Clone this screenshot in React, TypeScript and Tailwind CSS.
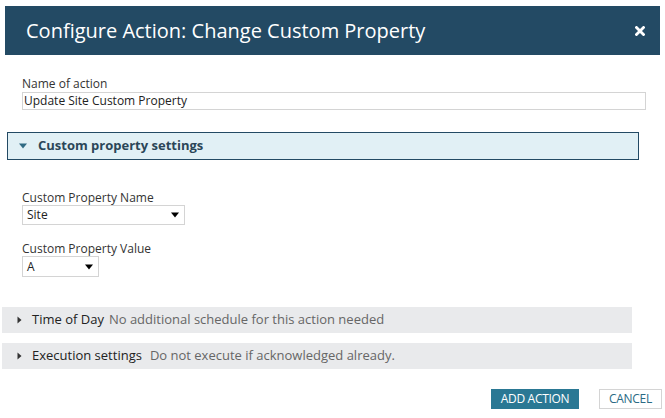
import React from "react";

function Caret({ className }: { className?: string }) {
  return (
    <svg width="8" height="8" viewBox="0 0 8 8" className={className}>
      <path d="M0 1.5 L8 1.5 L4 6.5 Z" fill="currentColor" />
    </svg>
  );
}

function RightCaret() {
  return (
    <svg width="5" height="8" viewBox="0 0 5 8" className="text-[#333]">
      <path d="M0.5 0.5 L4.5 4 L0.5 7.5 Z" fill="currentColor" />
    </svg>
  );
}

export default function App() {
  return (
    <div
      className="w-[665px] h-[418px] bg-white overflow-hidden text-[#333]"
      style={{ fontFamily: '"Open Sans", "Noto Sans", sans-serif' }}
    >
      <div className="mx-[5px] mt-[6px] h-[49px] bg-[#234a64] flex items-center justify-between pl-[21px] pr-[15px]">
        <div className="text-white text-[20px] leading-[24px]">
          Configure Action: Change Custom Property
        </div>
        <svg width="10" height="10" viewBox="0 0 10 10">
          <path d="M1.5 1.5 L8.5 8.5 M8.5 1.5 L1.5 8.5" stroke="white" strokeWidth="2.8" strokeLinecap="square" />
        </svg>
      </div>

      <div className="pl-[22px] pr-[19px] mt-[21px]">
        <div className="text-[12px] leading-[16px]">Name of action</div>
        <div className="h-[18px] border border-[#d4d4d4] flex items-center pl-[1px] text-[12px] text-[#222]">
          Update Site Custom Property
        </div>
      </div>

      <div className="ml-[7px] mt-[22px] w-[632px] h-[28px] bg-[#e1f0f5] border border-[#234a64] flex items-center pl-[11px]">
        <Caret className="text-[#2f6a83]" />
        <span className="ml-[11px] text-[13px] font-bold text-[#2b4658]">
          Custom property settings
        </span>
      </div>

      <div className="pl-[22px] mt-[31px]">
        <div className="text-[12px] leading-[14px]">Custom Property Name</div>
        <div className="w-[163px] h-[20px] border border-[#d4d4d4] flex items-center justify-between pl-[4px] pr-[5px] text-[12px] text-[#222]">
          <span>Site</span>
          <Caret className="text-black" />
        </div>
        <div className="mt-[17px] text-[12px] leading-[14px]">Custom Property Value</div>
        <div className="w-[77px] h-[21px] border border-[#d4d4d4] flex items-center justify-between pl-[4px] pr-[5px] text-[12px] text-[#222]">
          <span>A</span>
          <Caret className="text-black" />
        </div>
      </div>

      <div className="ml-[2px] mt-[30px] w-[630px] h-[26px] bg-[#e9eaec] flex items-center pl-[15px] text-[13px]">
        <RightCaret />
        <span className="ml-[10px] text-[#222]">Time of Day</span>
        <span className="ml-[5px] text-[#666]">No additional schedule for this action needed</span>
      </div>

      <div className="ml-[2px] mt-[10px] w-[630px] h-[26px] bg-[#e9eaec] flex items-center pl-[15px] text-[13px]">
        <RightCaret />
        <span className="ml-[10px] text-[#222]">Execution settings</span>
        <span className="ml-[8px] text-[#666]">Do not execute if acknowledged already.</span>
      </div>

      <div className="mt-[20px] flex justify-end pr-[3px] gap-[20px]">
        <div className="w-[88px] h-[20px] bg-[#2a7894] text-white text-[12px] flex items-center justify-center tracking-[-0.3px]">
          ADD ACTION
        </div>
        <div className="w-[63px] h-[20px] border border-[#d4d4d4] text-[#2a6a84] text-[12px] flex items-center justify-center tracking-[-0.3px]">
          CANCEL
        </div>
      </div>
    </div>
  );
}
